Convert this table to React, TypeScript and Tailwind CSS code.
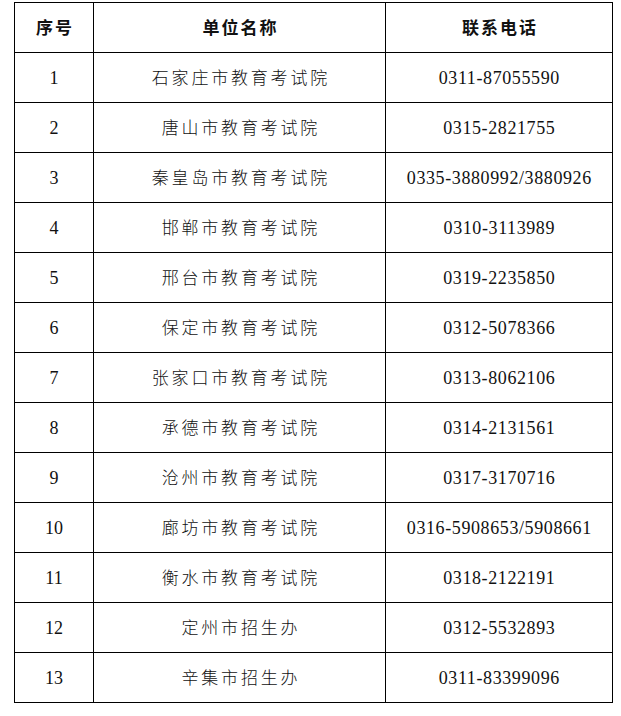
import React from 'react'

type Row = { no: string; name: string; tel: string }

const ROWS: Row[] = [
  { no: '1', name: '石家庄市教育考试院', tel: '0311-87055590' },
  { no: '2', name: '唐山市教育考试院', tel: '0315-2821755' },
  { no: '3', name: '秦皇岛市教育考试院', tel: '0335-3880992/3880926' },
  { no: '4', name: '邯郸市教育考试院', tel: '0310-3113989' },
  { no: '5', name: '邢台市教育考试院', tel: '0319-2235850' },
  { no: '6', name: '保定市教育考试院', tel: '0312-5078366' },
  { no: '7', name: '张家口市教育考试院', tel: '0313-8062106' },
  { no: '8', name: '承德市教育考试院', tel: '0314-2131561' },
  { no: '9', name: '沧州市教育考试院', tel: '0317-3170716' },
  { no: '10', name: '廊坊市教育考试院', tel: '0316-5908653/5908661' },
  { no: '11', name: '衡水市教育考试院', tel: '0318-2122191' },
  { no: '12', name: '定州市招生办', tel: '0312-5532893' },
  { no: '13', name: '辛集市招生办', tel: '0311-83399096' },
]

const CJK = 'font-["Noto_Sans_CJK_SC",sans-serif]'
const NUM = 'font-["Liberation_Serif","Noto_Sans_CJK_SC",serif]'

const cell = 'flex h-[50px] items-center justify-center border-r border-b border-black'

export default function App() {
  return (
    <div className="min-h-[716px] w-[621px] bg-white pt-[2px] pl-[14px] text-[#111]">
      <div className="w-[599px] border-l border-t border-black">
        <div className="flex">
          <div className={`${cell} w-[79px]`}>
            <span className={`${CJK} -mt-[1px] pl-[2px] text-[17px] font-bold tracking-[2px]`}>序号</span>
          </div>
          <div className={`${cell} w-[292px]`}>
            <span className={`${CJK} -mt-[1px] pl-[2px] text-[17px] font-bold tracking-[2px]`}>单位名称</span>
          </div>
          <div className={`${cell} w-[227px]`}>
            <span className={`${CJK} -mt-[1px] pl-[2px] text-[17px] font-bold tracking-[2px]`}>联系电话</span>
          </div>
        </div>
        {ROWS.map((r) => (
          <div key={r.no} className="flex">
            <div className={`${cell} w-[79px]`}>
              <span className={`${NUM} mt-[1px] text-[18px]`}>{r.no}</span>
            </div>
            <div className={`${cell} w-[292px]`}>
              <span className={`${CJK} -mt-[1px] pl-[2.8px] text-[17px] font-light tracking-[2.8px]`}>
                {r.name}
              </span>
            </div>
            <div className={`${cell} w-[227px]`}>
              <span className={`${NUM} mt-[1px] pl-[0.6px] text-[18px] tracking-[0.6px]`}>{r.tel}</span>
            </div>
          </div>
        ))}
      </div>
    </div>
  )
}
